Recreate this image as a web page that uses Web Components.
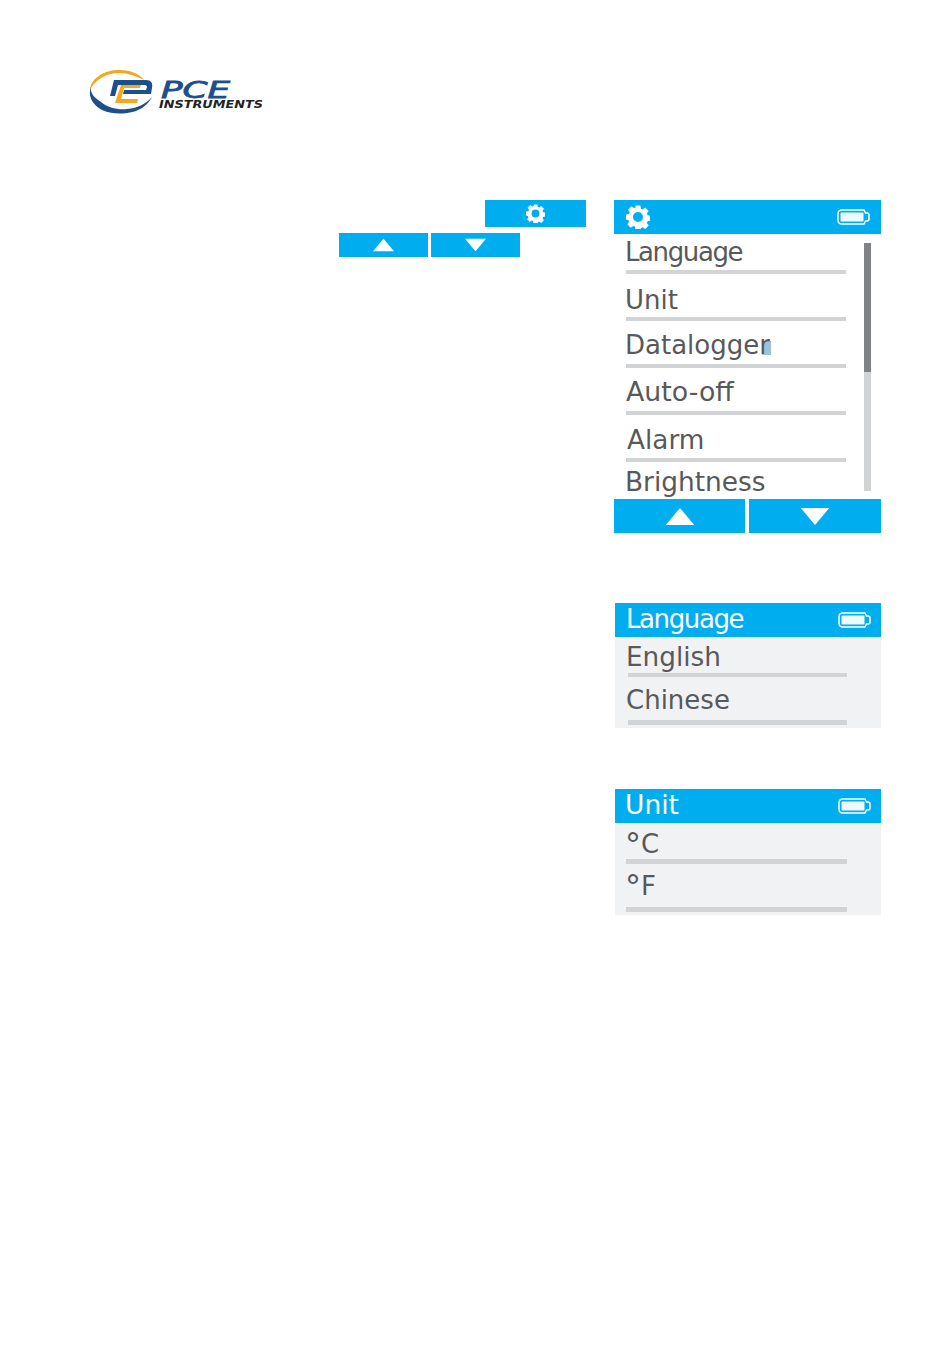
<!DOCTYPE html>
<html>
<head>
<meta charset="utf-8">
<title>PCE Instruments</title>
<style>
html, body { margin: 0; background: #fff; }
body { font-family: "DejaVu Sans", sans-serif; }
.deg { font-size: 32px; vertical-align: -3px; line-height: 0; }
</style>
</head>
<body>
<manual-page>
  <pce-logo slot="logo"></pce-logo>
  <soft-key slot="keys" class="gear" icon="gear"></soft-key>
  <div slot="keys" style="display:flex;gap:3px;justify-content:flex-end;margin:6px 66px 0 0">
    <soft-key class="arrow" icon="up"></soft-key>
    <soft-key class="arrow" icon="down"></soft-key>
  </div>

  <device-screen slot="screens" gear scroll style="width:267px;height:333px">
    <menu-row first dy="-1" track="-1.4" shift="1">Language</menu-row>
    <menu-row dy="2" shift="1">Unit</menu-row>
    <menu-row mark shift="1">Datalogger</menu-row>
    <menu-row shift="2" size="26.8">Auto-off</menu-row>
    <menu-row shift="3" dy="1" size="26.3">Alarm</menu-row>
    <menu-row last dy="1" size="26.4" shift="1">Brightness</menu-row>
    <screen-keys slot="footer"></screen-keys>
  </device-screen>

  <device-screen slot="screens" title="Language" track="-1.4" tx="1" tint style="width:266px;height:125px;margin:70px 0 0 1px">
    <menu-row first dy="1" lx="13" lw="219" shift="1" size="26.3">English</menu-row>
    <menu-row dy="-1" lx="13" lw="219" shift="1" h="48" lh="5">Chinese</menu-row>
  </device-screen>

  <device-screen slot="screens" title="Unit" tsize="26.500" tint style="width:266px;height:126px;margin:61px 0 0 1px">
    <menu-row first dy="2" lx="11" lw="221" h="41" lh="5"><span class="deg">°</span>C</menu-row>
    <menu-row dy="-2" lx="11" lw="221" h="48" lh="5"><span class="deg">°</span>F</menu-row>
  </device-screen>
</manual-page>

<script>
const GEAR = `<svg viewBox="0 0 24 24" width="100%" height="100%" style="display:block"><path fill="#fff" fill-rule="evenodd" d="M9.6 0.6h4.8l0.6 3.1 1.7 0.7 2.6-1.8 3.4 3.4-1.8 2.6 0.7 1.7 3.1 0.6v4.8l-3.1 0.6-0.7 1.7 1.8 2.6-3.4 3.4-2.6-1.8-1.7 0.7-0.6 3.1H9.6L9 21.6l-1.7-0.7-2.6 1.8-3.4-3.4 1.8-2.6-0.7-1.7-3.1-0.6V9.6L3.1 9l0.7-1.7L2 4.700 5.4 1.3 8 3.1 9.700 2.4zM12 7a5 5 0 1 0 0 10a5 5 0 0 0 0-10z"/></svg>`;

class ManualPage extends HTMLElement {
  constructor() {
    super();
    this.attachShadow({mode: 'open'}).innerHTML = `
      <style>
        :host { display: block; width: 950px; height: 1364px; box-sizing: border-box; padding: 66px 0 0 88px; }
        .main { display: grid; grid-template-columns: 498px 267px; column-gap: 28px; margin-top: 84px; }
        .keys, .screens { display: flex; flex-direction: column; }
      </style>
      <slot name="logo"></slot>
      <div class="main">
        <div class="keys"><slot name="keys"></slot></div>
        <div class="screens"><slot name="screens"></slot></div>
      </div>`;
  }
}

class PceLogo extends HTMLElement {
  constructor() {
    super();
    this.attachShadow({mode: 'open'}).innerHTML = `
      <style>:host { display: block; width: 180px; height: 50px; } svg { display: block; }</style>
      <svg width="180" height="50" viewBox="0 0 180 50">
        <path fill="#f5a81c" d="M2 24C3 12 16 4 31 4c10 0 20 3 25 10C48 10 39 7 31 7 18 7 7 14 2 24z"/>
        <path fill="#1d4f8c" d="M3 21C-1 31 6 40 14 44c9 4 18 4 25 3 12-1 21-8 25-16-6 7-14 11-25 12-9 1-19-1-26-7-6-4-11-8-10-15z"/>
        <path fill="#1d4f8c" d="M26 14H58c5 0 7 3 6 8l-1 6H35l1-4h22l1-3c0-1-1-2-2-2H30l-3 11h-5z"/>
        <path fill="#f5a81c" d="M33 19h20l-1 3H36l-3 11h17l-1 4H27z"/>
        <text x="73" y="31.500" font-family="DejaVu Sans" font-style="italic" font-size="23" fill="#1d4f8c" stroke="#1d4f8c" stroke-width=".8" textLength="69" lengthAdjust="spacingAndGlyphs">PCE</text>
        <text x="71" y="41.500" font-family="DejaVu Sans" font-weight="700" font-style="italic" font-size="10" fill="#222" textLength="104" lengthAdjust="spacingAndGlyphs">INSTRUMENTS</text>
      </svg>`;
  }
}

class SoftKey extends HTMLElement {
  constructor() {
    super();
    const icon = this.getAttribute('icon');
    let inner = '';
    if (icon == 'gear') inner = `<span class="g">${GEAR}</span>`;
    if (icon == 'up') inner = `<svg viewBox="0 0 30 20" class="t"><path fill="#fff" d="M15 1 L30 19 H0z"/></svg>`;
    if (icon == 'down') inner = `<svg viewBox="0 0 30 20" class="t"><path fill="#fff" d="M0 1 H30 L15 19z"/></svg>`;
    this.attachShadow({mode: 'open'}).innerHTML = `
      <style>
        :host { display: flex; align-items: center; justify-content: center; background: #00aeef; box-sizing: border-box; }
        :host(.gear) { width: 101px; height: 27px; margin-left: 397px; }
        :host(.arrow) { width: 89px; height: 24px; }
        :host(.big) { width: 131px; height: 34px; }
        :host(.big.wide) { width: 132px; }
        .g { display: block; width: 19px; height: 19px; }
        .t { display: block; width: 21px; height: 14px; }
        :host(.big) .t { width: 30px; height: 19px; }
      </style>
      ${inner}`;
  }
}

class BatteryIcon extends HTMLElement {
  constructor() {
    super();
    this.attachShadow({mode: 'open'}).innerHTML = `
      <style>:host { display: block; width: 33px; height: 16px; } svg { display: block; }</style>
      <svg width="33" height="16" viewBox="0 0 33 16">
        <path d="M5 1H27L28.500 4H30C31.500 4 32 5 32 6V10C32 11 31.500 12 30 12H28.500L27 15H5C2 15 1 13 1 11V5C1 3 2 1 5 1z" fill="none" stroke="#fff" stroke-width="1.500"/>
        <rect x="3.500" y="3.500" width="23" height="9" rx="1" fill="#eefafe"/>
      </svg>`;
  }
}

class DeviceScreen extends HTMLElement {
  constructor() {
    super();
    const title = this.getAttribute('title');
    const track = this.getAttribute('track') || 0;
    const tx = this.getAttribute('tx') || 0;
    const tsize = this.getAttribute('tsize') || 26;
    const head = this.hasAttribute('gear') ? `<span class="g">${GEAR}</span>` : `<span class="t">${title}</span>`;
    this.attachShadow({mode: 'open'}).innerHTML = `
      <style>
        :host { display: flex; flex-direction: column; box-sizing: border-box; background: #fff; }
        :host([tint]) { background: #f1f2f4; }
        header { flex: 0 0 34px; height: 34px; background: #00aeef; display: flex; align-items: center; justify-content: space-between; padding: 0 11px 0 10px; box-sizing: border-box; }
        :host([tint]) header { padding-right: 10px; }
        .t { color: #fff; font-size: ${tsize}px; line-height: 34px; letter-spacing: ${track}px; margin-left: ${tx}px; position: relative; top: -1px; }
        .g { display: block; width: 24px; height: 24px; margin: -1px 0 0 2px; }
        .body { flex: 1; min-height: 0; display: flex; }
        .list { flex: 0 0 250px; min-width: 0; }
        .track { width: 7px; margin: 9px 0 8px 0; background: #d1d3d4; display: none; }
        :host([scroll]) .track { display: block; }
        .thumb { height: 129px; background: #808285; }
      </style>
      <header>${head}<battery-icon></battery-icon></header>
      <div class="body">
        <div class="list"><slot></slot></div>
        <div class="track"><div class="thumb"></div></div>
      </div>
      <slot name="footer"></slot>`;
  }
}

class MenuRow extends HTMLElement {
  constructor() {
    super();
    const attr = (name, dflt) => Number(this.getAttribute(name) || dflt);
    const height = attr('h', this.hasAttribute('first') ? 40 : this.hasAttribute('last') ? 36 : 47);
    this.attachShadow({mode: 'open'}).innerHTML = `
      <style>
        :host { display: block; height: ${height}px; box-sizing: border-box; position: relative; color: #58595b; font-size: ${attr('size', 26)}px; }
        .txt { display: block; position: relative; top: ${attr('dy', 0)}px; line-height: 30px; padding: 9px 0 0 ${10 + attr('shift', 0)}px; white-space: nowrap; letter-spacing: ${attr('track', 0)}px; }
        :host([first]) .txt, :host([last]) .txt { padding-top: 4px; }
        .line { position: absolute; left: ${attr('lx', 12)}px; bottom: 0; width: ${attr('lw', 220)}px; height: ${attr('lh', 4.5)}px; background: #d1d3d4; }
        :host([last]) .line { display: none; }
        .mark { display: none; position: absolute; left: 148px; top: 20px; width: 9px; height: 14px; background: #9cc3de; }
        :host([mark]) .mark { display: block; }
      </style>
      <i class="mark"></i>
      <span class="txt"><slot></slot></span>
      <i class="line"></i>`;
  }
}

class ScreenKeys extends HTMLElement {
  constructor() {
    super();
    this.attachShadow({mode: 'open'}).innerHTML = `
      <style>:host { display: flex; justify-content: space-between; height: 34px; }</style>
      <soft-key class="big" icon="up"></soft-key>
      <soft-key class="big wide" icon="down"></soft-key>`;
  }
}

customElements.define('soft-key', SoftKey);
customElements.define('battery-icon', BatteryIcon);
customElements.define('menu-row', MenuRow);
customElements.define('screen-keys', ScreenKeys);
customElements.define('device-screen', DeviceScreen);
customElements.define('pce-logo', PceLogo);
customElements.define('manual-page', ManualPage);
</script>
</body>
</html>
